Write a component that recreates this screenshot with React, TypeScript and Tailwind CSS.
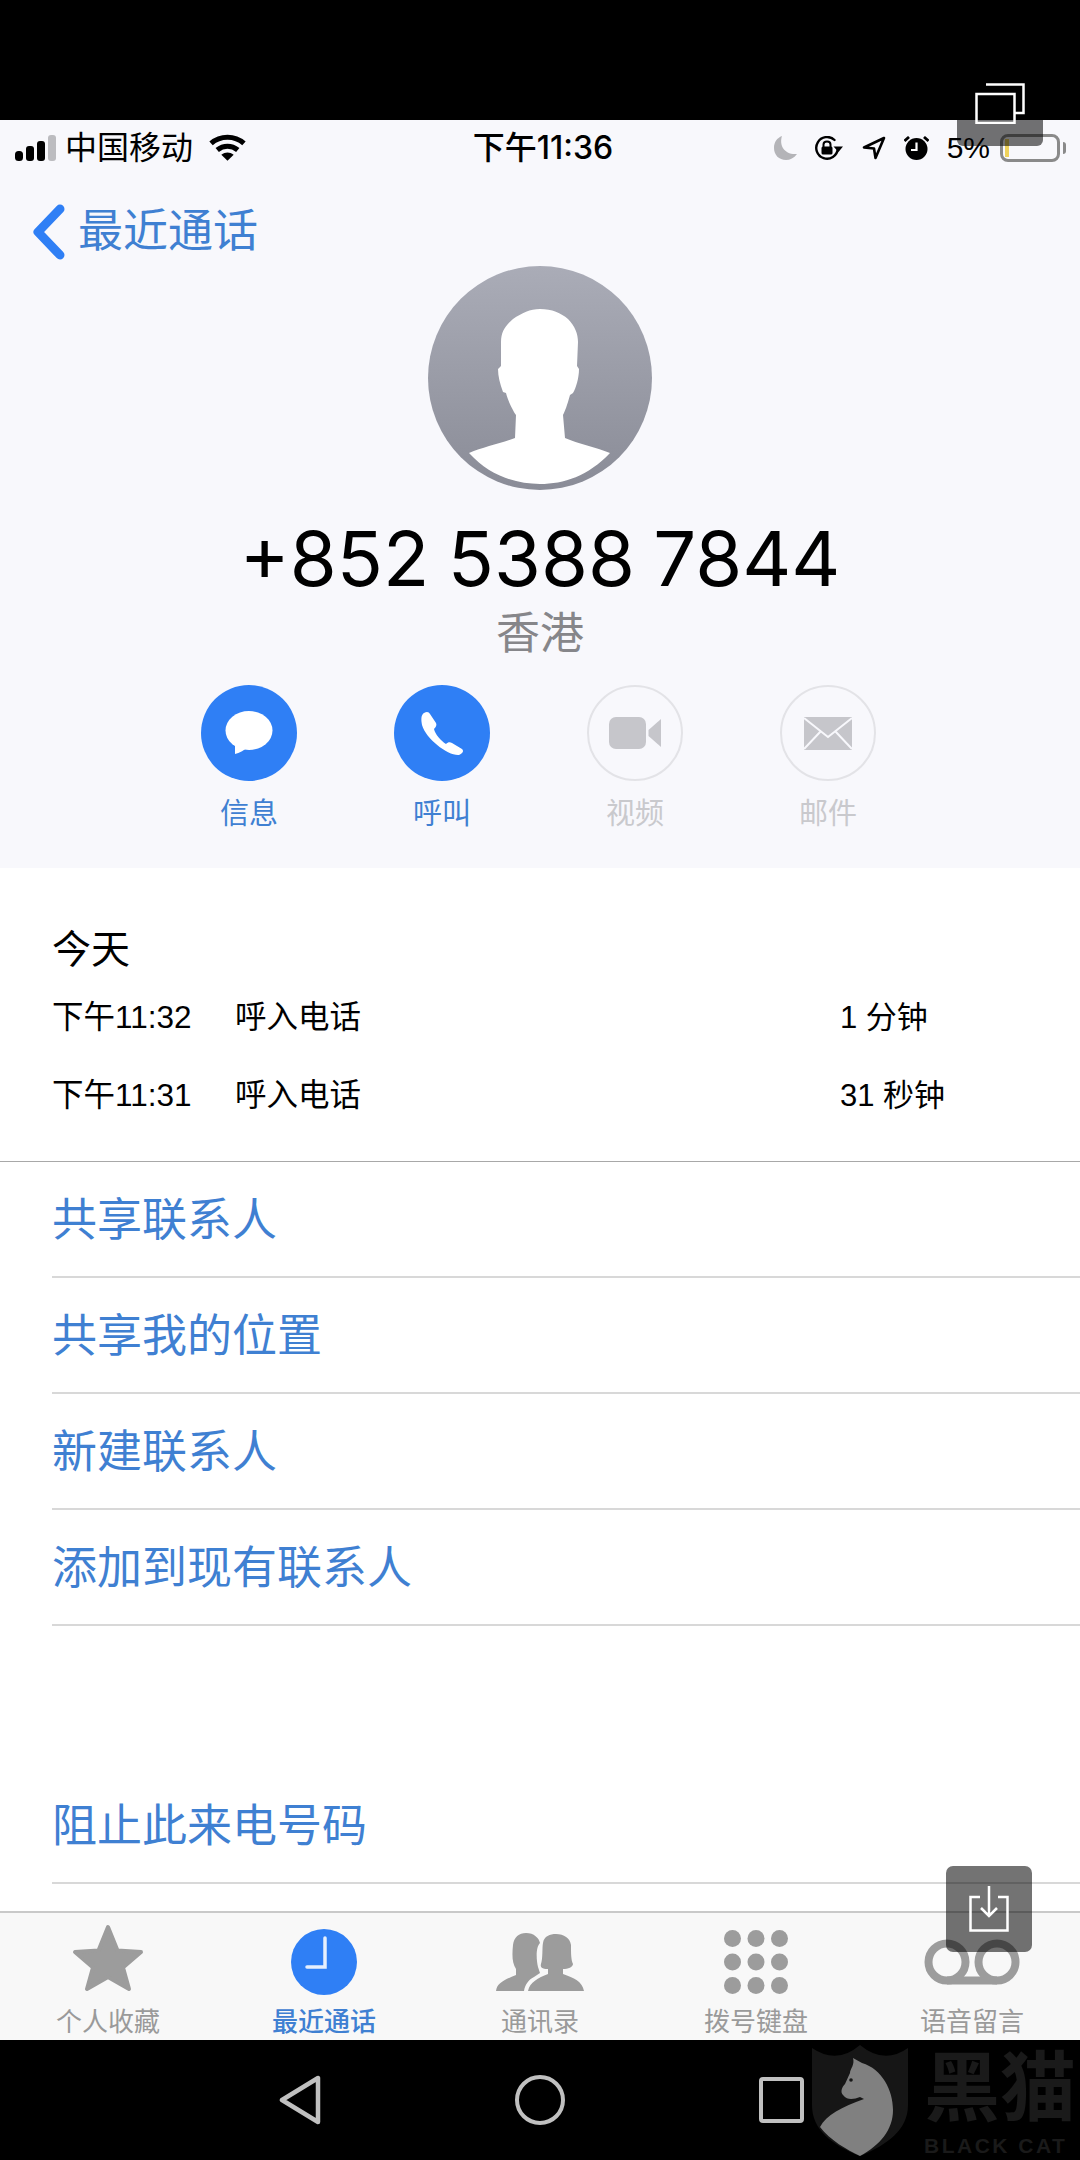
// pantalla de detalle de llamada, captura de iPhone dentro de un marco Android
const calls = [
  { time: "下午11:32", type: "呼入电话", length: "1 分钟" },
  { time: "下午11:31", type: "呼入电话", length: "31 秒钟" },
]

const actions = ["共享联系人", "共享我的位置", "新建联系人", "添加到现有联系人"]

function SignalBars() {
  return (
    <svg width="42" height="26" viewBox="0 0 42 26">
      <rect x="0" y="16" width="8" height="10" rx="3.500" fill="#000" />
      <rect x="11" y="11" width="8" height="15" rx="3" fill="#000" />
      <rect x="22" y="6" width="8" height="20" rx="3" fill="#000" />
      <rect x="33" y="0" width="8" height="26" rx="3" fill="#bcbcc0" />
    </svg>
  )
}

function Wifi() {
  return (
    <svg width="37" height="27" viewBox="0 0 36 26" fill="none" stroke="#000" strokeWidth="5">
      <path d="M2 9C11 1 25 1 34 9" />
      <path d="M8 15.500C14 10.500 22 10.500 28 15.500" />
      <path d="M18 26L12 20C16 17 20 17 24 20Z" fill="#000" stroke="none" />
    </svg>
  )
}

function Moon() {
  return (
    <svg width="23" height="24" viewBox="0 0 23 24">
      <path d="M8 0C5 9 10 19 23 18C20 22 16 24 12 24C5 24 0 19 0 12C0 6 3 2 8 0Z" fill="#b4b4b8" />
    </svg>
  )
}

function RotationLock() {
  return (
    <svg width="29" height="24" viewBox="0 0 29 24" fill="none" stroke="#000" strokeWidth="2.400">
      <path d="M19.500 4A10.800 10.800 0 1 0 22.800 13" strokeLinecap="round" />
      <path d="M18.500 10.500H28L23.500 16Z" fill="#000" stroke="none" />
      <path d="M8.500 11V8.500C8.500 4.500 15.500 4.500 15.500 8.500V11" strokeWidth="2" />
      <rect x="6.500" y="10.500" width="11" height="8" rx="1.500" fill="#000" stroke="none" />
    </svg>
  )
}

function LocationArrow() {
  return (
    <svg width="24" height="24" viewBox="0 0 24 24" fill="none">
      <path d="M22 2L2 11.500L12 12.500L13.500 22Z" stroke="#000" strokeWidth="2.600" strokeLinejoin="round" />
    </svg>
  )
}

function Alarm() {
  return (
    <svg width="25" height="24" viewBox="0 0 25 24" fill="none">
      <circle cx="12.500" cy="13" r="11" fill="#000" />
      <path d="M0.500 5L5 1M24.500 5L20 1" stroke="#000" strokeWidth="2.800" />
      <path d="M12.500 6.500V14H7" stroke="#fff" strokeWidth="2.200" />
    </svg>
  )
}

function Silhouette() {
  return (
    <svg width="224" height="224" viewBox="0 0 224 224">
      <path
        d="M112 43C124 43 133 47 140 53C147 60 150 68 150 76L149 100L151 103C151 112 148 122 145 127L142 129C139 140 137 145 135 149L137 172C150 178 168 181 182 187C160 210 136 218 112 218C88 218 62 210 41 187C55 181 72 178 87 172L88 149C85 145 80 135 78 127L75 126C72 118 70 110 70 103L73 100L73 76C73 66 77 60 85 53C94 47 102 43 112 43Z"
        fill="#fff"
      />
    </svg>
  )
}

function Bubble() {
  return (
    <svg width="48" height="44" viewBox="0 0 48 44">
      <ellipse cx="24" cy="19.500" rx="23.500" ry="19.500" fill="#fff" />
      <path d="M10 30L10 43C14 42 20 39 24 35Z" fill="#fff" />
    </svg>
  )
}

function Handset() {
  return (
    <svg width="48" height="48" viewBox="0 0 48 48">
      <path
        d="M6 4C9 2 11 3 12 5L18 14C19 16 18 18 16 20C17 25 23 32 28 35C30 33 32 33 34 34L44 40C46 42 45 44 41 46C30 47 8 30 4 16C3 10 3 6 6 4Z"
        fill="#fff"
      />
    </svg>
  )
}

function VideoGlyph() {
  return (
    <svg width="52" height="32" viewBox="0 0 52 32">
      <rect x="0" y="0" width="37" height="32" rx="7" fill="#c6c6cb" />
      <path d="M39.500 13L52 2V30L39.500 19Z" fill="#c6c6cb" />
    </svg>
  )
}

function MailGlyph() {
  return (
    <svg width="48" height="33" viewBox="0 0 48 33">
      <rect x="0" y="0" width="48" height="33" fill="#c6c6cb" />
      <path d="M0 1L24 20L48 1M0 32L17 14M48 32L31 14" fill="none" stroke="#f8f8fc" strokeWidth="2" />
    </svg>
  )
}

function Star() {
  return (
    <svg width="72" height="68" viewBox="0 0 72 68" className="mb-[8px]">
      <polygon
        points="36,3 45.500,26.500 69,28 51,43.500 57,65 36,53 15,65 21,43.500 3,28 26.500,26.500"
        fill="#9c9c9c"
        stroke="#9c9c9c"
        strokeWidth="4"
        strokeLinejoin="round"
      />
    </svg>
  )
}

function RecentsClock() {
  return (
    <svg width="66" height="66" viewBox="0 0 66 66">
      <circle cx="33" cy="33" r="33" fill="#2f7ff5" />
      <path d="M34 9V38H16" fill="none" stroke="#e6effd" strokeWidth="3.500" strokeLinecap="round" />
    </svg>
  )
}

function People() {
  return (
    <svg width="88" height="58" viewBox="0 0 88 58" fill="#9c9c9c">
      <path d="M0 58C1 50 8 47 20 42L20 36C16 30 16 22 17 12C18 4 23 0 30 0C38 0 43 5 44 10C40 14 40 25 42 34L44 40L38 44C32 47 29 52 28 58Z" />
      <path d="M32 58C34 49 42 45 52 41L52 36C46 36 44 34 45 31C47 25 46 15 47 10C48 3 54 1 60 1C68 1 74 5 75 12C75 20 75 27 77 31C77 34 72 36 67 36L67 41C78 45 86 48 88 58Z" />
    </svg>
  )
}

function Keypad() {
  const centers = [8.500, 32, 55.500]
  return (
    <svg width="64" height="64" viewBox="0 0 64 64" fill="#9c9c9c">
      {centers.map((cy) => centers.map((cx) => <circle key={`${cx}-${cy}`} cx={cx} cy={cy} r="8.500" />))}
    </svg>
  )
}

function Voicemail() {
  return (
    <svg width="96" height="46" viewBox="0 0 96 46" fill="none" stroke="#9c9c9c" strokeWidth="8">
      <circle cx="23" cy="23" r="18.500" />
      <circle cx="73" cy="23" r="18.500" />
      <path d="M23 41.500H73" />
    </svg>
  )
}

const tabs = [
  { label: "个人收藏", icon: <Star />, active: false },
  { label: "最近通话", icon: <RecentsClock />, active: true },
  { label: "通讯录", icon: <People />, active: false },
  { label: "拨号键盘", icon: <Keypad />, active: false },
  { label: "语音留言", icon: <Voicemail />, active: false },
]

export default function App() {
  return (
    <div className="relative w-[1080px] h-[2160px] overflow-hidden bg-black font-['Liberation_Sans','Noto_Sans_CJK_SC',sans-serif]">
      <div className="h-[120px]" />

      {/* cabecera gris claro */}
      <section className="h-[748px] bg-[#f8f8fc]">
        <div className="grid grid-cols-3 items-center h-[55px] pl-[15px] pr-[14px] text-[32px] leading-[40px] text-black">
          <div className="flex items-center">
            <SignalBars />
            <span className="ml-[8px]">中国移动</span>
            <span className="ml-[16px]">
              <Wifi />
            </span>
          </div>
          <div className="text-center pl-[5px] font-['Inter','Noto_Sans_CJK_SC',sans-serif] font-medium">下午11:36</div>
          <div className="flex items-center justify-end gap-[18px]">
            <Moon />
            <RotationLock />
            <LocationArrow />
            <Alarm />
            <div className="flex items-center gap-[10px]">
              <span className="text-[30px]">5%</span>
              <div className="flex items-center gap-[3px]">
                <div className="flex w-[60px] h-[28px] p-[2px] rounded-[8px] border-[3px] border-[#8a8a8a]">
                  <div className="w-[4px] h-full bg-[#efd25c]" />
                </div>
                <div className="w-[3px] h-[12px] rounded-r-full bg-[#8a8a8a]" />
              </div>
            </div>
          </div>
        </div>

        <div className="flex items-center h-[91px] pt-[22px] pl-[32px] text-[45px] leading-[60px] text-[#3f80d2]">
          <svg width="34" height="56" viewBox="0 0 34 56" fill="none">
            <path d="M28 5L6 28L28 51" stroke="#2f7ff5" strokeWidth="9" strokeLinecap="round" strokeLinejoin="round" />
          </svg>
          <span className="ml-[12px]">最近通话</span>
        </div>

        <div className="flex flex-col items-center">
          <div className="w-[224px] h-[224px] rounded-full bg-gradient-to-b from-[#aaacb7] to-[#8a8c97]">
            <Silhouette />
          </div>
          <div className="mt-[24px] font-['Inter','Liberation_Sans',sans-serif] text-[76px] leading-[88px] [word-spacing:-3px] text-black">
            +852 5388 7844
          </div>
          <div className="mt-[4px] text-[44px] leading-[56px] text-[#86868a]">香港</div>
        </div>

        <div className="grid grid-cols-[193px_193px_193px_193px] justify-center pr-[3px] mt-[23px]">
          <div className="flex flex-col items-center">
            <div className="flex items-center justify-center w-[96px] h-[96px] rounded-full bg-[#2f7ff5]">
              <Bubble />
            </div>
            <span className="mt-[15px] text-[29px] leading-[36px] text-[#3f80d2]">信息</span>
          </div>
          <div className="flex flex-col items-center">
            <div className="flex items-center justify-center w-[96px] h-[96px] rounded-full bg-[#2f7ff5]">
              <Handset />
            </div>
            <span className="mt-[15px] text-[29px] leading-[36px] text-[#3f80d2]">呼叫</span>
          </div>
          <div className="flex flex-col items-center">
            <div className="flex items-center justify-center w-[96px] h-[96px] rounded-full border-2 border-[#e3e3e7]">
              <VideoGlyph />
            </div>
            <span className="mt-[15px] text-[29px] leading-[36px] text-[#c9c9cd]">视频</span>
          </div>
          <div className="flex flex-col items-center">
            <div className="flex items-center justify-center w-[96px] h-[96px] rounded-full border-2 border-[#e3e3e7]">
              <MailGlyph />
            </div>
            <span className="mt-[15px] text-[29px] leading-[36px] text-[#c9c9cd]">邮件</span>
          </div>
        </div>
      </section>

      {/* registro de llamadas y acciones */}
      <section className="h-[1043px] bg-white">
        <div className="pt-[59px] pl-[52px] text-[39px] leading-[46px] text-black">今天</div>
        <div className="mt-[6px] mb-[26px] pl-[52px] text-[31.5px] text-black">
          {calls.map((call) => (
            <div key={call.time} className="grid grid-cols-[183px_605px_1fr] items-center h-[78px]">
              <span>{call.time}</span>
              <span>{call.type}</span>
              <span className="text-[31px]">{call.length}</span>
            </div>
          ))}
        </div>
        <div className="h-[1px] bg-[#a8a8a8]" />
        {actions.map((action) => (
          <div
            key={action}
            className="flex items-center h-[116px] pt-[4px] ml-[52px] border-b-2 border-[#d8d8d8] text-[45px] text-[#3f80d2]"
          >
            {action}
          </div>
        ))}
        <div className="flex items-center h-[116px] pt-[4px] mt-[142px] ml-[52px] border-b-2 border-[#d8d8d8] text-[45px] text-[#3f80d2]">
          阻止此来电号码
        </div>
      </section>

      {/* barra de pestañas */}
      <nav className="grid grid-cols-5 h-[129px] bg-[#f8f8f8] border-t-2 border-[#c9c9c9]">
        {tabs.map((tab) => (
          <div key={tab.label} className="flex flex-col items-center">
            <div className="flex items-center justify-center h-[94px] pt-[4px]">{tab.icon}</div>
            <span
              className={
                tab.active
                  ? "text-[26px] leading-[30px] font-medium text-[#3f80d2]"
                  : "text-[26px] leading-[30px] text-[#9a9a9a]"
              }
            >
              {tab.label}
            </span>
          </div>
        ))}
      </nav>

      {/* botones de navegación de Android */}
      <div className="flex items-center justify-center gap-[194px] h-[120px] pl-[3px]">
        <svg width="42" height="50" viewBox="0 0 42 50" fill="none">
          <path d="M39 3V47L3 25Z" stroke="#c0c0c0" strokeWidth="4.500" strokeLinejoin="round" />
        </svg>
        <div className="w-[50px] h-[50px] rounded-full border-[4px] border-[#c0c0c0]" />
        <div className="w-[45px] h-[46px] rounded-[4px] border-[4px] border-[#c0c0c0]" />
      </div>

      {/* botones flotantes sobre la captura */}
      <div className="absolute left-[957px] top-[60px] w-[86px] h-[86px] rounded-[6px] bg-black/55" />
      <svg className="absolute left-[975px] top-[83px]" width="50" height="41" viewBox="0 0 50 41" fill="none" stroke="#fff" strokeWidth="2.500">
        <path d="M11 1.500H48.500V30H39.500" />
        <rect x="1.500" y="11" width="38" height="29" />
      </svg>
      <div className="absolute left-[946px] top-[1866px] flex items-center justify-center w-[86px] h-[86px] rounded-[7px] bg-black/55">
        <svg width="40" height="46" viewBox="0 0 40 46" fill="none" stroke="#fff" strokeWidth="2.500">
          <path d="M11 11H1.500V44.500H38.500V11H29" />
          <path d="M20 0V30M12 22L20 30L28 22" />
        </svg>
      </div>

      {/* marca de agua */}
      <div className="absolute left-[812px] top-[2045px] flex">
        <svg width="97" height="112" viewBox="0 0 97 112">
          <path d="M0 3Q25 20 48 0Q72 20 96 3V60C96 85 75 100 48 111C20 100 0 85 0 60Z" fill="#161616" />
          <path d="M41 13L50 18C70 24 81 45 81 65C81 85 68 100 48 111C35 105 18 95 8 82C14 70 30 62 52 54L48 52C42 54 36 56 31 50C28 47 30 42 33 39L38 28C38 24 43 20 41 13Z" fill="#808080" />
          <circle cx="39" cy="35" r="1.800" fill="#161616" />
        </svg>
        <div className="ml-[15px] text-[#1a1a1a]">
          <div className="mt-[2px] text-[76px] leading-[84px] font-bold whitespace-nowrap">黑猫</div>
          <div className="mt-[3px] text-[21px] leading-[24px] font-bold tracking-[2.500px] whitespace-nowrap">BLACK CAT</div>
        </div>
      </div>
    </div>
  )
}
